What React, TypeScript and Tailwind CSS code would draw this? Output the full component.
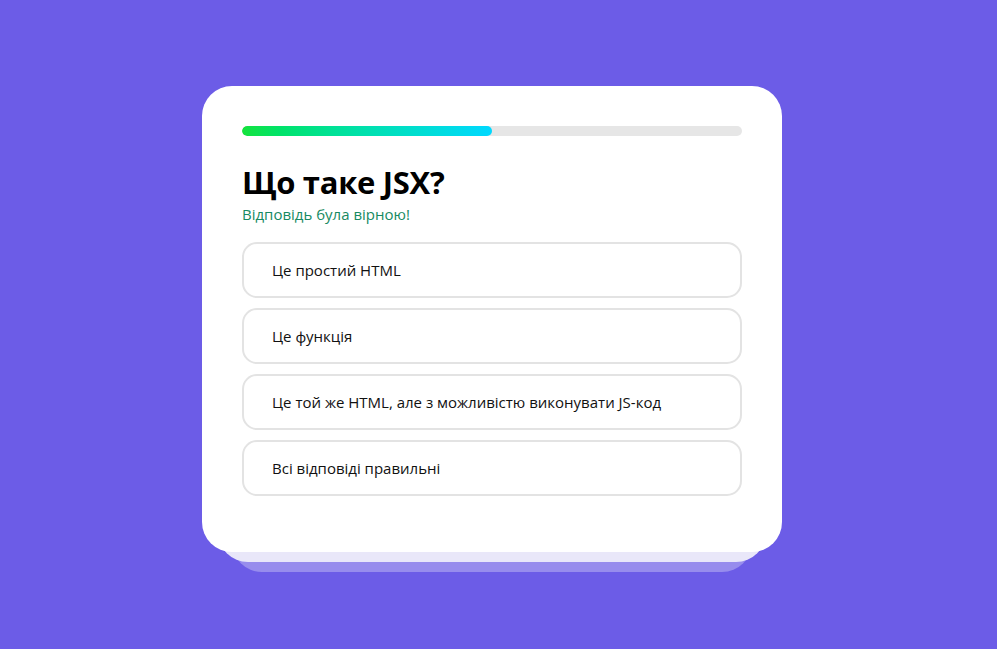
const answers = [
  "Це простий HTML",
  "Це функція",
  "Це той же HTML, але з можливістю виконувати JS-код",
  "Всі відповіді правильні",
];

export default function App() {
  const progress = 50;

  return (
    <div
      className="min-h-screen w-full bg-[#6c5ce7] flex justify-center pt-[86px] pr-[13px]"
      style={{ fontFamily: '"Open Sans", "Noto Sans", sans-serif' }}
    >
      <div className="relative w-[580px] h-[466px]">
        {/* stacked cards behind */}
        <div className="absolute left-[30px] right-[30px] top-[40px] bottom-[-20px] rounded-[30px] bg-[#978ced]" />
        <div className="absolute left-[16px] right-[16px] top-[20px] bottom-[-10px] rounded-[30px] bg-[#e9e7f9]" />

        <div className="relative h-full rounded-[30px] bg-white px-10 pt-10">
          <div className="h-[10px] w-full rounded-full bg-[#e6e6e6] overflow-hidden">
            <div
              className="h-full rounded-full bg-gradient-to-r from-[#14e33a] to-[#00d8ff]"
              style={{ width: `${progress}%` }}
            />
          </div>

          <h1 className="mt-[26px] text-[31px] leading-[40px] font-bold text-black tracking-[-0.3px]">
            Що таке JSX?
          </h1>
          <p className="mt-[2px] text-[15px] leading-[20px] text-[#178a62]">Відповідь була вірною!</p>

          <ul className="mt-[18px] flex flex-col gap-[10px]">
            {answers.map((a) => (
              <li
                key={a}
                className="h-[56px] flex items-center px-[28px] rounded-[15px] border-2 border-[#e3e3e3] text-[15px] text-[#111]"
              >
                {a}
              </li>
            ))}
          </ul>
        </div>
      </div>
    </div>
  );
}
